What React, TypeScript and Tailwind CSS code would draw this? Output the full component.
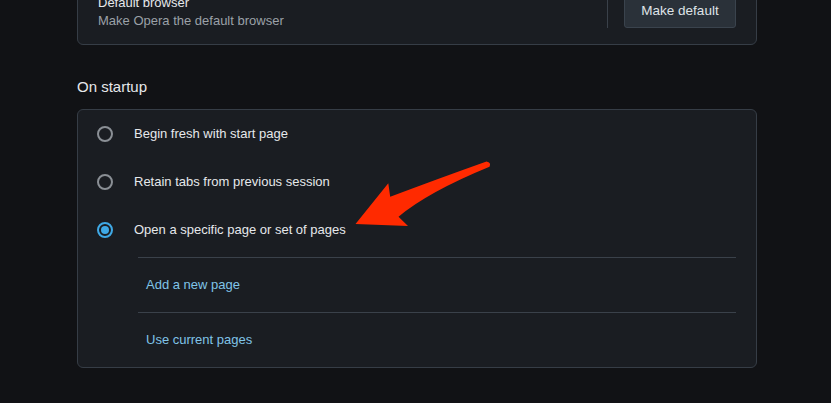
import React from 'react'

type Option = { label: string; checked?: boolean }

const options: Option[] = [
    { label: 'Begin fresh with start page' },
    { label: 'Retain tabs from previous session' },
    { label: 'Open a specific page or set of pages', checked: true },
]

function Radio({ checked }: { checked?: boolean }) {
    if (checked) {
        return (
            <span className="flex h-4 w-4 shrink-0 items-center justify-center rounded-full border-2 border-[#3fa9e6]">
                <span className="h-2 w-2 rounded-full bg-[#3fa9e6]" />
            </span>
        )
    }
    return <span className="h-4 w-4 shrink-0 rounded-full border-2 border-[#8a8f95]" />
}

export default function App() {
    return (
        <div
            className="relative h-[403px] w-[831px] overflow-hidden bg-[#111215] text-[13px] text-[#e6e8eb]"
            style={{ fontFamily: '"Liberation Sans", Arial, sans-serif' }}
        >
            <div className="ml-[77px] w-[680px]">
                {/* Default browser card (scrolled partly out of view) */}
                <div className="-mt-[22px] flex h-[67px] items-center rounded-md border border-[#363d46] bg-[#1a1d22] pl-[20px] pr-[20px]">
                    <div className="flex-1 leading-[18px]">
                        <div className="text-[#e6e8eb]">Default browser</div>
                        <div className="text-[#9ba1a8]">Make Opera the default browser</div>
                    </div>
                    <div className="h-[32px] w-px bg-[#3a414a]" />
                    <button className="ml-[16px] h-[32px] w-[112px] rounded-[3px] border border-[#3a434d] bg-[#2a3139] text-[13.5px] text-[#dfe3e7]">
                        Make default
                    </button>
                </div>

                <h2 className="mt-[32px] text-[15px] leading-[20px] text-[#e6e8eb]">On startup</h2>

                {/* On startup card */}
                <div className="mt-[12px] rounded-md border border-[#363d46] bg-[#1a1d22]">
                    <div>
                        {options.map((o) => (
                            <div key={o.label} className="flex h-12 items-center pl-[19px]">
                                <Radio checked={o.checked} />
                                <span className="ml-[21px] text-[#e6e8eb]">{o.label}</span>
                            </div>
                        ))}
                    </div>
                    <div className="ml-[60px] mr-[20px] mt-[3px]">
                        <div className="flex h-[55px] items-center border-t border-[#3a414a] pl-[8px] text-[#80c4e8]">
                            Add a new page
                        </div>
                        <div className="flex h-[55px] items-center border-t border-[#3a414a] pl-[8px] text-[#80c4e8]">
                            Use current pages
                        </div>
                    </div>
                </div>
            </div>

            {/* Annotation arrow */}
            <svg className="pointer-events-none absolute left-0 top-0" width="831" height="403" viewBox="0 0 831 403">
                <path
                    d="M 486.5 161.5 Q 491.5 162.5 489.5 166.8 Q 428 192 398.5 216.8 L 408 226 L 355.5 224 L 388.3 183.3 L 390.2 196.8 Q 440 178 486.5 161.5 Z"
                    fill="#ff2a00"
                />
            </svg>
        </div>
    )
}
